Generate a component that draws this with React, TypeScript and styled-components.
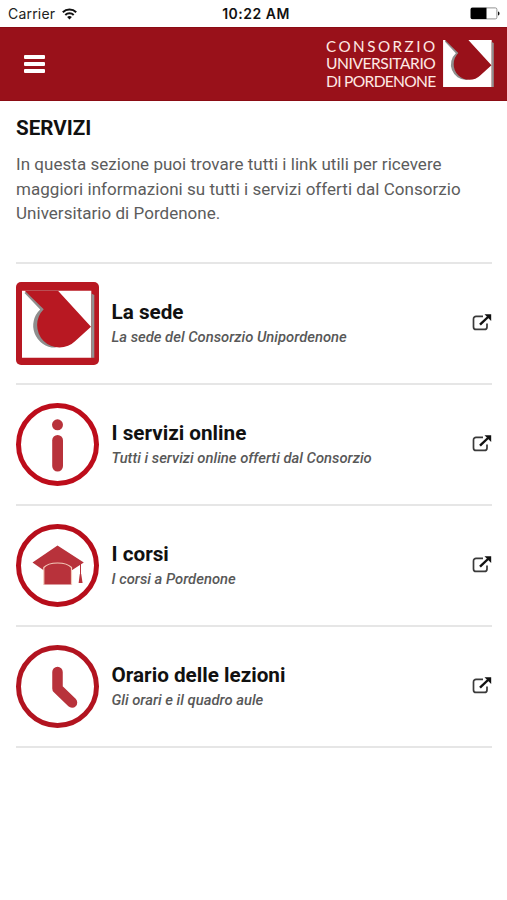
import React from "react";
import styled, { createGlobalStyle } from "styled-components";

const GlobalStyle = createGlobalStyle`
  * { box-sizing: border-box; }
  body { margin: 0; background: #fff; font-family: Roboto, "Noto Sans", sans-serif; color: #111; }
  svg { flex: none; display: block; }
`;

const Screen = styled.div`
  min-height: 900px;
  background: #fff;
`;

const StatusBar = styled.div`
  height: 27px;
  display: grid;
  grid-template-columns: 1fr auto 1fr;
  align-items: center;
  padding: 0 7px 0 8px;
  font-family: Inter, sans-serif;
  font-size: 14px;
  color: #222;
`;

const Carrier = styled.div`
  display: flex;
  align-items: center;
  gap: 7px;
  letter-spacing: 0.2px;
`;

const Clock = styled.div`
  font-weight: 600;
  font-size: 14px;
  letter-spacing: 0.5px;
  color: #111;
  padding-left: 4px;
`;

const BatterySlot = styled.div`
  display: flex;
  justify-content: flex-end;
`;

const Header = styled.header`
  height: 74px;
  display: flex;
  align-items: center;
  justify-content: space-between;
  padding: 0 13px 0 24px;
  background: #99111a;
  border-top: 1px solid #8b0c14;
  border-bottom: 1px solid #8b0c14;
`;

const MenuButton = styled.button`
  display: flex;
  flex-direction: column;
  gap: 3px;
  padding: 0;
  border: 0;
  background: none;
`;

const MenuBar = styled.span`
  width: 21px;
  height: 4px;
  border-radius: 1px;
  background: #fff;
`;

const Brand = styled.div`
  display: flex;
  align-items: center;
  gap: 6px;
`;

const BrandName = styled.div`
  width: 111px;
  display: flex;
  flex-direction: column;
  font-family: Lato, sans-serif;
  color: #ffe9e4;
  white-space: nowrap;
`;

const BrandLine = styled.span<{ $size: number; $spacing: number }>`
  font-size: ${(p) => p.$size}px;
  letter-spacing: ${(p) => p.$spacing}px;
  line-height: 17.3px;
`;

const Main = styled.main`
  padding: 15px 15px 0 16px;
`;

const Title = styled.h1`
  margin: 0;
  font-size: 20.6px;
  line-height: 24px;
  font-weight: 700;
`;

const Intro = styled.p`
  margin: 12px 0 36px;
  font-size: 17px;
  line-height: 24.5px;
  letter-spacing: 0.035px;
  color: #5c5c5c;
  white-space: nowrap;
`;

const List = styled.ul`
  list-style: none;
  margin: 0;
  padding: 0;
  border-top: 2px solid #e6e6e6;
`;

const Row = styled.li`
  height: 121px;
  display: flex;
  align-items: center;
  gap: 12.5px;
  border-bottom: 2px solid #e6e6e6;
`;

const RowText = styled.div`
  flex: 1;
  padding-top: 2px;
`;

const RowTitle = styled.h2`
  margin: 0;
  font-size: 20.7px;
  line-height: 26px;
  font-weight: 700;
`;

const RowNote = styled.p`
  margin: 0;
  font-size: 14.8px;
  line-height: 24px;
  font-style: italic;
  font-weight: 500;
  color: #585858;
`;

const Wifi = () => (
  <svg width="15" height="12" viewBox="0 0 15 12" fill="none" stroke="#111" strokeWidth="2">
    <path d="M.8 4.3a9.6 9.6 0 0 1 13.4 0M3.3 7a6 6 0 0 1 8.4 0" />
    <path d="M7.5 11.5 5.1 9.1a3.5 3.5 0 0 1 4.8 0z" fill="#111" stroke="none" />
  </svg>
);

const Battery = () => (
  <svg width="30" height="13" viewBox="0 0 30 13">
    <rect x=".9" y=".9" width="26" height="11" rx="1.6" fill="#fff" stroke="#777" strokeWidth=".8" />
    <path d="M2 .8h14.5v11.2H2a1.3 1.3 0 0 1-1.3-1.3V2A1.3 1.3 0 0 1 2 .8z" fill="#000" />
    <path d="M28 4.5c2 .5 2 3.5 0 4z" fill="#111" />
  </svg>
);

const Mark = ({ red }: { red: string }) => (
  <>
    <path d="M6 8.7h69.3v67H6z" fill="#fff" />
    <path d="M75.3 11.5l3 1.5v62.7h-3z" fill="#929292" />
    <path d="M11 8.7H42V64.5L39 65.6A22 22 0 0 1 24.2 27.5L8.5 11z" fill="#8e8e8e" />
    <path d="M8.7 8.7H42L75 44.7 59.3 59A22 22 0 1 1 27.7 27.3z" fill={red} />
  </>
);

const BrandMark = () => (
  <svg width="51" height="47" viewBox="6 8.7 72.5 67">
    <Mark red="#99111a" />
  </svg>
);

const SedeIcon = () => (
  <svg width="83" height="83" viewBox="0 0 83 83">
    <rect width="83" height="83" rx="5" fill="#b81822" />
    <Mark red="#b81822" />
  </svg>
);

const Ring = ({ color, children }: { color: string; children: React.ReactNode }) => (
  <svg width="83" height="83" viewBox="0 0 83 83">
    <circle cx="41.5" cy="41.5" r="39" fill="none" stroke={color} strokeWidth="5" />
    {children}
  </svg>
);

const InfoIcon = () => (
  <Ring color="#bd0d1b">
    <circle cx="41.5" cy="21.8" r="5.5" fill="#b8323b" />
    <rect x="36.2" y="32" width="10.8" height="36.5" rx="5.4" fill="#b8323b" />
  </Ring>
);

const CorsiIcon = () => (
  <Ring color="#b70e1b">
    <path d="M41.5 21.5 67.8 38.5 55.5 46.5V60.5H28V46.5L16.5 38.5z" fill="#b8323b" />
    <path d="M27.8 61V43.5C33 37.5 50 37.5 55.5 43.5V61" fill="none" stroke="#f3c9b9" strokeWidth="1.2" />
    <path d="M64.5 40v11" stroke="#b8323b" strokeWidth="1" />
    <path d="M63.8 50h1.4l1.4 9h-4z" fill="#b8323b" />
  </Ring>
);

const OrarioIcon = () => (
  <Ring color="#b21420">
    <path
      d="M41.5 27V43.5L56 57.5"
      fill="none"
      stroke="#b8323b"
      strokeWidth="10.5"
      strokeLinecap="round"
      strokeLinejoin="round"
    />
  </Ring>
);

const OpenIcon = () => (
  <svg width="20" height="18" viewBox="0 0 20 18" fill="none">
    <path
      d="M11 2.4H4a2.5 2.5 0 0 0-2.5 2.5v8A2.5 2.5 0 0 0 4 15.4h8.500a2.5 2.5 0 0 0 2.5-2.5V9.500"
      stroke="#3a3a3a"
      strokeWidth="1.700"
    />
    <path d="M8 10.700 16 3" stroke="#111" strokeWidth="2.400" />
    <path d="M12.500.3H19.200v6.700z" fill="#111" />
  </svg>
);

const services = [
  { title: "La sede", note: "La sede del Consorzio Unipordenone", Icon: SedeIcon },
  { title: "I servizi online", note: "Tutti i servizi online offerti dal Consorzio", Icon: InfoIcon },
  { title: "I corsi", note: "I corsi a Pordenone", Icon: CorsiIcon },
  { title: "Orario delle lezioni", note: "Gli orari e il quadro aule", Icon: OrarioIcon },
];

export default function App() {
  return (
    <Screen>
      <GlobalStyle />
      <StatusBar>
        <Carrier>
          Carrier
          <Wifi />
        </Carrier>
        <Clock>10:22 AM</Clock>
        <BatterySlot>
          <Battery />
        </BatterySlot>
      </StatusBar>
      <Header>
        <MenuButton aria-label="Menu">
          <MenuBar />
          <MenuBar />
          <MenuBar />
        </MenuButton>
        <Brand>
          <BrandName>
            <BrandLine $size={15.2} $spacing={2.5}>CONSORZIO</BrandLine>
            <BrandLine $size={15.6} $spacing={-0.45}>UNIVERSITARIO</BrandLine>
            <BrandLine $size={15.6} $spacing={-0.7}>DI PORDENONE</BrandLine>
          </BrandName>
          <BrandMark />
        </Brand>
      </Header>
      <Main>
        <Title>SERVIZI</Title>
        <Intro>
          In questa sezione puoi trovare tutti i link utili per ricevere
          <br />
          maggiori informazioni su tutti i servizi offerti dal Consorzio
          <br />
          Universitario di Pordenone.
        </Intro>
        <List>
          {services.map(({ title, note, Icon }) => (
            <Row key={title}>
              <Icon />
              <RowText>
                <RowTitle>{title}</RowTitle>
                <RowNote>{note}</RowNote>
              </RowText>
              <OpenIcon />
            </Row>
          ))}
        </List>
      </Main>
    </Screen>
  );
}
